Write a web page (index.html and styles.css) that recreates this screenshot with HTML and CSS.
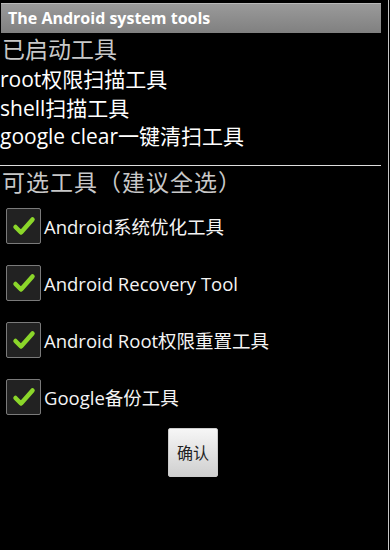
FILE: index.html
```html
<!DOCTYPE html>
<html lang="zh-CN">
<head>
    <meta charset="UTF-8">
    <meta name="viewport" content="width=device-width, initial-scale=1.0">
    <title>The Android system tools</title>
    <link rel="stylesheet" href="styles.css">
</head>
<body>
    <div class="screen">
        <div class="title-bar">The Android system tools</div>

        <div class="section">
            <div class="section-title">已启动工具</div>
            <div class="tool">root权限扫描工具</div>
            <div class="tool">shell扫描工具</div>
            <div class="tool">google clear一键清扫工具</div>
        </div>

        <div class="divider"></div>

        <div class="section">
            <div class="section-title spaced">可选工具（建议全选）</div>
            <div class="check-list">
                <label class="check-row">
                    <span class="check-box">
                        <svg viewBox="0 0 24 24" width="24" height="24"><path d="M3.5 13 L9 18.5 L20.5 5.5" fill="none" stroke="#8bd62a" stroke-width="4.5" stroke-linecap="round" stroke-linejoin="round"/></svg>
                    </span>
                    Android系统优化工具
                </label>
                <label class="check-row">
                    <span class="check-box">
                        <svg viewBox="0 0 24 24" width="24" height="24"><path d="M3.5 13 L9 18.5 L20.5 5.5" fill="none" stroke="#8bd62a" stroke-width="4.5" stroke-linecap="round" stroke-linejoin="round"/></svg>
                    </span>
                    Android Recovery Tool
                </label>
                <label class="check-row">
                    <span class="check-box">
                        <svg viewBox="0 0 24 24" width="24" height="24"><path d="M3.5 13 L9 18.5 L20.5 5.5" fill="none" stroke="#8bd62a" stroke-width="4.5" stroke-linecap="round" stroke-linejoin="round"/></svg>
                    </span>
                    Android Root权限重置工具
                </label>
                <label class="check-row">
                    <span class="check-box">
                        <svg viewBox="0 0 24 24" width="24" height="24"><path d="M3.5 13 L9 18.5 L20.5 5.5" fill="none" stroke="#8bd62a" stroke-width="4.5" stroke-linecap="round" stroke-linejoin="round"/></svg>
                    </span>
                    Google备份工具
                </label>
            </div>
            <div class="actions">
                <button class="confirm">确认</button>
            </div>
        </div>
    </div>
</body>
</html>
```

FILE: styles.css
```css
html, body {
    margin: 0;
    height: 100%;
    background: #000;
}
body {
    font-family: "Open Sans", "Noto Sans CJK SC", sans-serif;
    color: #fff;
}
.screen {
    width: 389px;
    height: 550px;
    border-right: 1px solid #c8c8c8;
    box-sizing: border-box;
    overflow: hidden;
}
.title-bar {
    margin: 3px 7px 0 1px;
    height: 30px;
    box-sizing: border-box;
    padding-left: 7px;
    background: linear-gradient(#9a9a9a, #808080);
    border-top: 1px solid #b8b8b8;
    color: #fff;
    font-weight: bold;
    font-size: 16px;
    line-height: 28px;
}
.section-title {
    font-size: 23px;
    line-height: 32px;
    color: #c8c8c8;
    padding-left: 2px;
}
.section-title.spaced {
    letter-spacing: 1px;
}
.tool {
    font-size: 21px;
    line-height: 28.5px;
    color: #fff;
}
.section:first-of-type .section-title {
    margin-top: 1px;
}
.divider {
    height: 1px;
    background: #ddd;
    margin: 14px 7px 0 0;
}
.check-row {
    display: flex;
    align-items: center;
    gap: 3px;
    height: 57px;
    padding-left: 6px;
    font-size: 18.5px;
    color: #f4f4f4;
}
.check-box {
    width: 33px;
    height: 34px;
    border: 1px solid #7a7a7a;
    border-radius: 2px;
    background: #222;
    display: flex;
    align-items: center;
    justify-content: center;
}
.actions {
    display: flex;
    justify-content: center;
    padding-right: 2px;
}
.confirm {
    width: 50px;
    height: 49px;
    margin-top: 2px;
    border: 1px solid #ccc;
    border-radius: 2px;
    background: linear-gradient(#f6f6f6, #cfcfcf);
    font-family: "Noto Sans CJK SC", sans-serif;
    font-size: 16px;
    color: #222;
    padding: 0;
}
```
